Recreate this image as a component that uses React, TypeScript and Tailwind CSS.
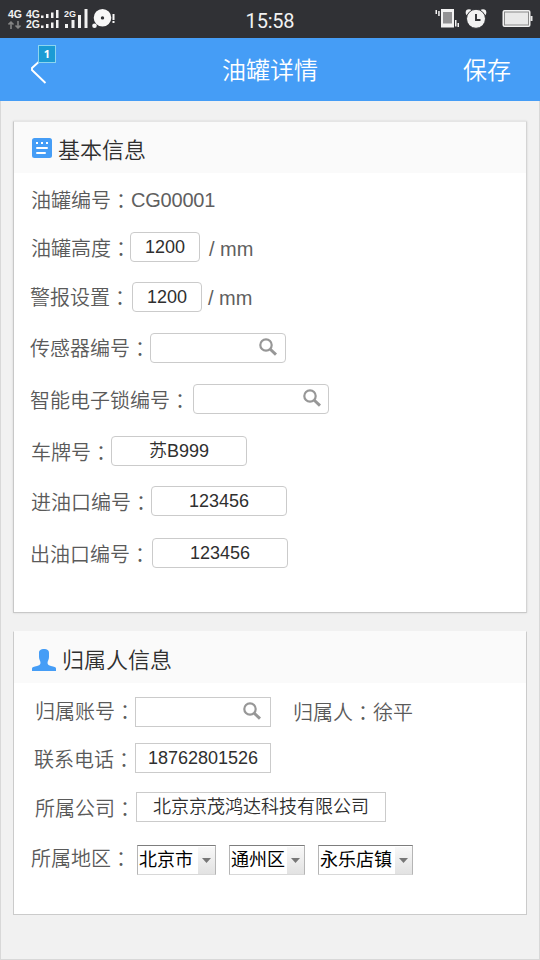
import type { ReactNode } from "react";

const SearchIcon = () => (
  <svg width="18" height="18" viewBox="0 0 18 18" fill="none" stroke="#979797">
    <circle cx="7" cy="7" r="5.7" strokeWidth="2.2" />
    <path d="M11 11 17 16.6" strokeWidth="3" />
  </svg>
);

function Label({ text, className = "" }: { text: string; className?: string }) {
  return (
    <div className={`flex h-[30px] shrink-0 items-center pt-0.5 whitespace-nowrap text-xl leading-[30px] text-[#5a5a5a] ${className}`}>
      <span>{text}</span>
      <span className="font-['Noto_Sans_CJK_TC',sans-serif]">：</span>
    </div>
  );
}

function Field({ children, search, className = "" }: { children?: ReactNode; search?: boolean; className?: string }) {
  return (
    <div className={`flex h-[30px] shrink-0 items-center border border-[#cbcbcb] bg-white text-lg leading-7 whitespace-nowrap text-[#2f2f2f] ${search ? "justify-end pb-0.5" : "justify-center"} ${className}`}>
      {search ? <SearchIcon /> : <span>{children}</span>}
    </div>
  );
}

function Picker({ value, className = "" }: { value: string; className?: string }) {
  return (
    <div className={`flex h-[30px] justify-between border border-t-[#7d7d7d] border-r-[#b5b5b5] border-b-[#d8d8d8] border-l-[#b5b5b5] bg-white text-lg leading-[29px] text-black ${className}`}>
      <span className="pl-px font-normal whitespace-nowrap">{value}</span>
      <span className="mt-px flex w-[17px] shrink-0 items-center justify-center bg-linear-to-b from-[#f8f8f8] to-[#e2e2e2]">
        <svg width="9" height="5" viewBox="0 0 9 5"><path d="M0 0h9L4.5 5z" fill="#777" /></svg>
      </span>
    </div>
  );
}

const Bars = () => (
  <svg className="mb-px h-[8px] w-[18px]" viewBox="0 0 18 8" fill="#f2f2f2">
    <path d="M0 5.500h2.500V8H0zM5 4h2.500v4H5zM10 2.500h2.500V8H10zM15 0h2.500v8H15z" />
  </svg>
);

function StatusBar() {
  return (
    <div className="flex h-[38px] items-start bg-[#303135] text-[#f2f2f2]">
      <div className="flex w-[230px] items-start pt-[9px] pl-2 font-['Liberation_Sans',sans-serif] text-[10.5px] leading-[10px] font-bold">
        <div className="flex w-[18px] flex-col">
          <span>4G</span>
          <svg className="mt-0.5" width="13" height="8" viewBox="0 0 13 8" fill="none" stroke="#858585" strokeWidth="1.6"><path d="M3 8V1M.5 3.500 3 1.200 5.500 3.500M10 0v7M7.500 4.500 10 6.800 12.500 4.500" /></svg>
        </div>
        <div className="flex w-[38px] flex-col">
          <div className="flex items-end gap-px"><span>4G</span><Bars /></div>
          <div className="flex items-end gap-px"><span>2G</span><Bars /></div>
        </div>
        <svg width="27" height="22" viewBox="0 0 27 22" fill="#f2f2f2">
          <text x="0" y="7.500" fontSize="9" fontWeight="700" fontFamily="Liberation Sans">2G</text>
          <path d="M1 15h3v4H1zM7.500 11h3v8h-3zM14 6h3v13h-3zM20.500 0h3v19h-3z" />
        </svg>
        <svg width="26" height="22" viewBox="0 0 26 22" fill="#f7f7f7">
          <path fillRule="evenodd" d="M11.500 0a8.800 8.800 0 1 1 0 17.600 8.800 8.800 0 0 1 0-17.600m0 7.200a1.700 1.700 0 1 0 0 3.400 1.700 1.700 0 0 0 0-3.400" />
          <circle cx="3.500" cy="16.700" r="2.300" />
          <path d="M21.500 5h2v6h-2zM21.500 12h2v2h-2z" />
        </svg>
      </div>
      <div className="w-20 pt-[7px] text-center font-['Roboto',sans-serif] text-xl leading-7 font-normal tracking-[-0.2px]">15:58</div>
      <div className="ml-auto flex pt-[8px] pr-[7px]">
        <svg width="24" height="22" viewBox="0 0 24 22" fill="#f2f2f2">
          <path d="M6 1h13v18.500H6zM.5 2H2v4H.5zM3.200 3h1.500v5H3.200zM20 12h1.500v6.500H20zM22.500 15H24v4h-1.500z" />
          <path d="M8 4h9v11.500H8z" fill="#929294" />
        </svg>
        <svg className="ml-1.5" width="22" height="22" viewBox="0 0 22 22" fill="#f2f2f2">
          <circle cx="4" cy="4.500" r="3.300" /><circle cx="18" cy="4.500" r="3.300" />
          <circle cx="11" cy="10.800" r="9.500" stroke="#303135" />
          <path d="M11 6v6h4.500" fill="none" stroke="#303135" strokeWidth="1.900" />
        </svg>
        <svg className="ml-[15px]" width="31" height="20" viewBox="0 0 31 20">
          <rect x="0.500" y="2" width="28" height="17" rx="2" fill="#f2f2f2" />
          <rect x="2.500" y="4" width="24" height="13" fill="#e9e9e9" stroke="#8a8a8a" />
          <path d="M28.500 8h2v5h-2z" fill="#e9e9e9" />
        </svg>
      </div>
    </div>
  );
}

function NavBar() {
  return (
    <div className="flex h-[63px] items-center justify-between bg-[#459df6] pt-[3px] text-2xl font-[350] text-white">
      <div className="w-[120px] self-start pl-[30px]">
        <div className="relative h-[50px] w-7">
          <svg className="absolute top-[17px] left-0" width="18" height="28" viewBox="0 0 18 28" fill="none" stroke="white" strokeWidth="1.900"><path d="M13 0 2 10v2L15.500 25" /></svg>
          <span className="absolute top-1 left-2 flex size-[18px] items-center justify-center border border-[#8dd5ef] bg-[#1b9bd4] font-['Noto_Sans',sans-serif] text-[11px] font-bold">1</span>
        </div>
      </div>
      <h1>油罐详情</h1>
      <button className="w-[120px] pr-[29px] text-right">保存</button>
    </div>
  );
}

export default function App() {
  return (
    <div className="flex h-[960px] w-[540px] flex-col overflow-hidden bg-[#f1f1f1] font-['Liberation_Sans','Noto_Sans_CJK_SC',sans-serif] font-[350]">
      <StatusBar />
      <NavBar />
      <main className="flex-1 border-x border-b border-[#d8d8d8] px-3 pt-5">
        <section className="h-[492px] border border-t-[#e5e5e5] border-r-[#d4d4d4] border-b-[#c8c8c8] border-l-[#c8c8c8] bg-white shadow-[0_0_2px_rgba(0,0,0,0.12)]">
          <div className="flex h-[51px] bg-[#fafafa] pl-[18px]">
            <svg className="mt-4" width="20" height="20" viewBox="0 0 20 20" fill="white">
              <rect width="20" height="20" rx="2.500" fill="#459df6" />
              <path d="M4 4h2v2H4zM9 4h2v2H9zM14 4h2v2h-2z" />
              <path d="M5 10h10M5 15h8" stroke="white" strokeWidth="2" strokeLinecap="round" />
            </svg>
            <h2 className="ml-1.5 pt-3 text-[22px] leading-[34px] text-[#2f2f2f]">基本信息</h2>
          </div>
          <div className="pl-4">
            <div className="mt-3 flex h-[30px] pl-px">
              <Label text="油罐编号" className="w-[100px]" />
              <span className="text-xl leading-[30px] tracking-[-0.2px] text-[#5f5f5f]">CG00001</span>
            </div>
            <div className="mt-[17px] flex h-[30px] pl-px">
              <Label text="油罐高度" className="mt-px w-[99px]" />
              <Field className="w-[70px] rounded">1200</Field>
              <span className="mt-0.5 ml-[9px] text-xl leading-[30px] text-[#5f5f5f]">/ mm</span>
            </div>
            <div className="mt-5 flex h-[30px]">
              <Label text="警报设置" className="w-[102px]" />
              <Field className="w-[70px] rounded">1200</Field>
              <span className="mt-px ml-1.5 text-xl leading-[30px] text-[#5f5f5f]">/ mm</span>
            </div>
            <div className="mt-[21px] flex h-[30px]">
              <Label text="传感器编号" className="w-[120px]" />
              <Field search className="w-[136px] rounded pr-2" />
            </div>
            <div className="mt-[21px] flex h-[30px]">
              <Label text="智能电子锁编号" className="mt-px w-[163px]" />
              <Field search className="w-[136px] rounded pr-[7px]" />
            </div>
            <div className="mt-[22px] flex h-[30px] pl-px">
              <Label text="车牌号" className="mt-px w-[80px]" />
              <Field className="w-[136px] rounded">苏B999</Field>
            </div>
            <div className="mt-5 flex h-[30px] pl-px">
              <Label text="进油口编号" className="mt-px w-[120px]" />
              <Field className="w-[136px] rounded">123456</Field>
            </div>
            <div className="mt-[22px] flex h-[30px]">
              <Label text="出油口编号" className="mt-px w-[122px]" />
              <Field className="w-[136px] rounded">123456</Field>
            </div>
          </div>
        </section>

        <section className="mt-[18px] h-[284px] border border-t-[#fafafa] border-r-[#cbcbcb] border-b-[#cbcbcb] border-l-[#cbcbcb] bg-white">
          <div className="flex h-[51px] bg-[#fafafa] pl-[18px]">
            <svg className="mt-[17px]" width="24" height="23" viewBox="0 0 24 23" fill="#459df6">
              <path d="M7 4C7 1 9 0 12 0s5 1 5 4v4c0 2.500-1.500 4-1.500 6 0 1.500 1.500 2.500 3.500 3 3 1 5 1 5 2.500V22H0v-2.500C0 18 2 18 5 17c2-.5 3.500-1.500 3.500-3 0-2-1.500-3.500-1.500-6z" />
            </svg>
            <h2 className="ml-1.5 pt-3 text-[22px] leading-[34px] text-[#2f2f2f]">归属人信息</h2>
          </div>
          <div className="pl-4">
            <div className="mt-3.5 flex h-[30px] pl-[5px]">
              <Label text="归属账号" className="-mt-px w-[100px]" />
              <Field search className="w-[136px] pr-[9px]" />
              <Label text="归属人" className="ml-[22px] w-[80px]" />
              <span className="pt-px text-xl leading-[31px] text-[#5a5a5a]">徐平</span>
            </div>
            <div className="mt-4 flex h-[30px] pl-1">
              <Label text="联系电话" className="mt-px w-[101px]" />
              <Field className="w-[136px]">18762801526</Field>
            </div>
            <div className="mt-[19px] flex h-[30px] pl-[5px]">
              <Label text="所属公司" className="mt-px w-[101px]" />
              <Field className="w-[250px]">北京京茂鸿达科技有限公司</Field>
            </div>
            <div className="mt-[23px] flex h-[30px] pl-px">
              <Label text="所属地区" className="-mt-0.5 w-[106px]" />
              <Picker value="北京市" className="w-[79px]" />
              <Picker value="通州区" className="ml-[13px] w-[76px]" />
              <Picker value="永乐店镇" className="ml-[13px] w-[95px]" />
            </div>
          </div>
        </section>
      </main>
    </div>
  );
}
